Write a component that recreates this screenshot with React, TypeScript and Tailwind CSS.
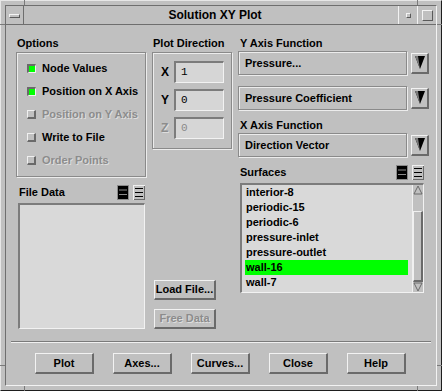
import React from "react";

const FONT = "font-['Liberation_Sans',Arial,sans-serif]";

const OPTIONS = [
  { label: "Node Values", checked: true, disabled: false },
  { label: "Position on X Axis", checked: true, disabled: false },
  { label: "Position on Y Axis", checked: false, disabled: true },
  { label: "Write to File", checked: false, disabled: false },
  { label: "Order Points", checked: false, disabled: true },
];

const SURFACES = [
  "interior-8",
  "periodic-15",
  "periodic-6",
  "pressure-inlet",
  "pressure-outlet",
  "wall-16",
  "wall-7",
];

const BUTTONS = ["Plot", "Axes...", "Curves...", "Close", "Help"];

const etched = "border border-[#8a8a8a] shadow-[inset_1px_1px_0_#ececec,1px_1px_0_#ececec]";
const raised = "border-t border-l border-t-[#f2f2f2] border-l-[#f2f2f2] border-b-2 border-r-2 border-b-[#6a6a6a] border-r-[#6a6a6a]";
const sunken = "border-t-2 border-l-2 border-t-[#7c7c7c] border-l-[#7c7c7c] border-b border-r border-b-[#f2f2f2] border-r-[#f2f2f2]";
const dim = "text-[#8c8c8c] [text-shadow:1px_1px_0_#dedede]";

function Check({ checked }: { checked: boolean }) {
  return checked ? (
    <span className="block h-[9px] w-[9px] border-t-2 border-l-2 border-t-[#6a6a6a] border-l-[#6a6a6a] border-b border-r border-b-[#f0f0f0] border-r-[#f0f0f0] bg-[#00ff00]" />
  ) : (
    <span className="block h-[9px] w-[9px] border-t border-l border-t-[#f0f0f0] border-l-[#f0f0f0] border-b-2 border-r-2 border-b-[#6a6a6a] border-r-[#6a6a6a] bg-[#c0c0c0]" />
  );
}

function ListIcons() {
  return (
    <div className="flex items-center gap-[4px]">
      <svg width="12" height="15" viewBox="0 0 12 15">
        <rect x="0" y="0" width="12" height="15" fill="#8a8a8a" />
        <rect x="1" y="1" width="10" height="13" fill="#000" />
        <rect x="2" y="4.5" width="8" height="1" fill="#8a8a8a" />
        <rect x="2" y="9" width="8" height="1" fill="#8a8a8a" />
      </svg>
      <svg width="12" height="15" viewBox="0 0 12 15">
        <rect x="0" y="0" width="12" height="15" fill="#f0f0f0" />
        <rect x="1" y="1" width="11" height="14" fill="#6a6a6a" />
        <rect x="1" y="1" width="10" height="13" fill="#c0c0c0" />
        <rect x="2" y="3" width="8" height="1" fill="#000" />
        <rect x="2" y="7" width="8" height="1" fill="#000" />
        <rect x="2" y="11" width="8" height="1" fill="#000" />
      </svg>
    </div>
  );
}

function Dropdown({ value }: { value: string }) {
  return (
    <div className="flex items-center">
      <div className={`flex h-[24px] w-[169px] items-center pl-[6px] ${etched}`}>
        <span>{value}</span>
      </div>
      <div className={`ml-[4px] flex h-[21px] w-[18px] items-center justify-center bg-[#c0c0c0] ${raised}`}>
        <svg width="10" height="13" viewBox="0 0 10 13">
          <polygon points="0,0 10,0 5,13" fill="#000" />
          <polygon points="0,0 3,0 5,13" fill="#7a7a7a" />
        </svg>
      </div>
    </div>
  );
}

function Field({ label, value, disabled }: { label: string; value: string; disabled?: boolean }) {
  return (
    <div className="flex items-center">
      <span className={`w-[20px] pl-[8px] text-[12px] ${disabled ? dim : ""}`}>{label}</span>
      <div className={`ml-[1px] flex h-[22px] w-[50px] items-center bg-[#d6d6d6] pl-[5px] font-['Liberation_Mono',monospace] text-[11px] font-normal ${sunken} ${disabled ? "text-[#8a8a8a]" : "text-black"}`}>
        {value}
      </div>
    </div>
  );
}

function Resize({ className }: { className: string }) {
  return <span className={`absolute bg-[#7a7a7a] ${className}`} />;
}

export default function App() {
  return (
    <div className={`relative h-[391px] w-[442px] bg-[#c0c0c0] text-[11px] font-bold text-black ${FONT}`}>
      <div className="h-full w-full border border-t-[#e6e6e6] border-l-[#e6e6e6] border-b-[#1e1e1e] border-r-[#1e1e1e] p-[4px]">
        <div className="flex h-full w-full flex-col border border-t-[#6e6e6e] border-l-[#6e6e6e] border-b-[#f2f2f2] border-r-[#f2f2f2]">
          {/* title bar */}
          <div className="flex h-[19px] border-b border-b-[#6e6e6e]">
            <div className="flex w-[18px] items-center justify-center border-r border-r-[#6e6e6e] pt-[1px]">
              <span className="block h-[4px] w-[11px] border-t border-l border-t-[#f4f4f4] border-l-[#f4f4f4] border-b border-r border-b-[#5a5a5a] border-r-[#5a5a5a]" />
            </div>
            <div className="flex flex-1 items-center justify-center pl-[8px] text-[12px]">Solution XY Plot</div>
            <div className="flex w-[19px] items-center justify-center border-l border-l-[#f2f2f2] pl-[1px]">
              <span className="block h-[5px] w-[5px] border-t border-l border-t-[#f4f4f4] border-l-[#f4f4f4] border-b border-r border-b-[#5a5a5a] border-r-[#5a5a5a]" />
            </div>
            <div className="flex w-[19px] items-center justify-center border-l border-l-[#f2f2f2]">
              <span className="block h-[11px] w-[11px] border-t border-l border-t-[#f4f4f4] border-l-[#f4f4f4] border-b border-r border-b-[#5a5a5a] border-r-[#5a5a5a]" />
            </div>
          </div>

          {/* content */}
          <div className="flex flex-1 flex-col">
            <div className="flex pl-[10px] pt-[10px]">
              {/* left column */}
              <div className="flex w-[130px] flex-col">
                <div className="flex h-[17px] items-center pl-[1px]">Options</div>
                <div className={`flex h-[125px] flex-col justify-center gap-[9px] pl-[10px] ${etched}`}>
                  {OPTIONS.map((o) => (
                    <div key={o.label} className="flex h-[14px] items-center gap-[6px]">
                      <Check checked={o.checked} />
                      <span className={o.disabled ? dim : ""}>{o.label}</span>
                    </div>
                  ))}
                </div>
                <div className="mt-[8px] flex h-[15px] items-center justify-between pl-[3px] pr-[1px]">
                  <span>File Data</span>
                  <ListIcons />
                </div>
                <div className={`ml-[2px] mt-[3px] h-[126px] w-[127px] bg-[#d9d9d9] ${sunken}`} />
              </div>

              {/* middle column */}
              <div className="ml-[6px] flex w-[80px] flex-col">
                <div className="flex h-[17px] items-center pl-[1px]">Plot Direction</div>
                <div className={`flex h-[97px] flex-col gap-[6px] pt-[8px] ${etched}`}>
                  <Field label="X" value="1" />
                  <Field label="Y" value="0" />
                  <Field label="Z" value="0" disabled />
                </div>
                <div className="ml-[2px] mt-[131px] flex flex-col gap-[9px]">
                  <div className={`flex h-[20px] w-[62px] items-center justify-center ${raised}`}>Load File...</div>
                  <div className={`flex h-[20px] w-[62px] items-center justify-center ${dim} ${raised}`}>Free Data</div>
                </div>
              </div>

              {/* right column */}
              <div className="ml-[6px] flex flex-col">
                <div className="flex h-[16px] items-center pl-[2px]">Y Axis Function</div>
                <Dropdown value="Pressure..." />
                <div className="mt-[11px]">
                  <Dropdown value="Pressure Coefficient" />
                </div>
                <div className="mt-[7px] flex h-[16px] items-center pl-[2px]">X Axis Function</div>
                <Dropdown value="Direction Vector" />
                <div className="mt-[8px] flex h-[15px] items-center justify-between pl-[2px] pr-[5px]">
                  <span>Surfaces</span>
                  <ListIcons />
                </div>
                <div className={`ml-[2px] mt-[3px] flex h-[110px] w-[184px] bg-[#d9d9d9] ${sunken}`}>
                  <div className="flex flex-1 flex-col">
                    {SURFACES.map((s) => (
                      <div
                        key={s}
                        className={`ml-[3px] mr-[4px] flex h-[15px] items-center pl-[1px] ${s === "wall-16" ? "bg-[#00ff00]" : ""}`}
                      >
                        {s}
                      </div>
                    ))}
                  </div>
                  <div className="flex w-[11px] flex-col bg-[#c0c0c0] border-l border-l-[#f0f0f0]">
                    <svg width="10" height="10" viewBox="0 0 10 10">
                      <polygon points="5,1 9,9 1,9" fill="#c0c0c0" stroke="#6a6a6a" strokeWidth="1" />
                    </svg>
                    <div className="mt-[16px] flex-1 border-t border-l border-t-[#f0f0f0] border-l-[#f0f0f0] border-b-2 border-r-2 border-b-[#6a6a6a] border-r-[#6a6a6a]" />
                    <svg width="10" height="10" viewBox="0 0 10 10">
                      <polygon points="1,1 9,1 5,9" fill="#c0c0c0" stroke="#6a6a6a" strokeWidth="1" />
                    </svg>
                  </div>
                </div>
              </div>
            </div>

            {/* separator */}
            <div className="mx-[5px] mt-[12px] h-[2px] border-t border-t-[#7a7a7a] border-b border-b-[#f0f0f0]" />

            {/* buttons */}
            <div className="mt-[10px] flex gap-[19px] pl-[29px]">
              {BUTTONS.map((b) => (
                <div key={b} className={`flex h-[21px] w-[59px] items-center justify-center ${raised}`}>
                  {b}
                </div>
              ))}
            </div>
          </div>
        </div>
      </div>

      {/* resize handle marks on the frame */}
      <Resize className="left-[24px] top-0 h-[5px] w-px" />
      <Resize className="left-[417px] top-0 h-[5px] w-px" />
      <Resize className="left-0 top-[24px] h-px w-[5px]" />
      <Resize className="right-0 top-[24px] h-px w-[5px]" />
      <Resize className="left-0 top-[365px] h-px w-[5px]" />
      <Resize className="right-0 top-[365px] h-px w-[5px]" />
      <Resize className="bottom-0 left-[24px] h-[5px] w-px" />
      <Resize className="bottom-0 left-[417px] h-[5px] w-px" />
    </div>
  );
}
